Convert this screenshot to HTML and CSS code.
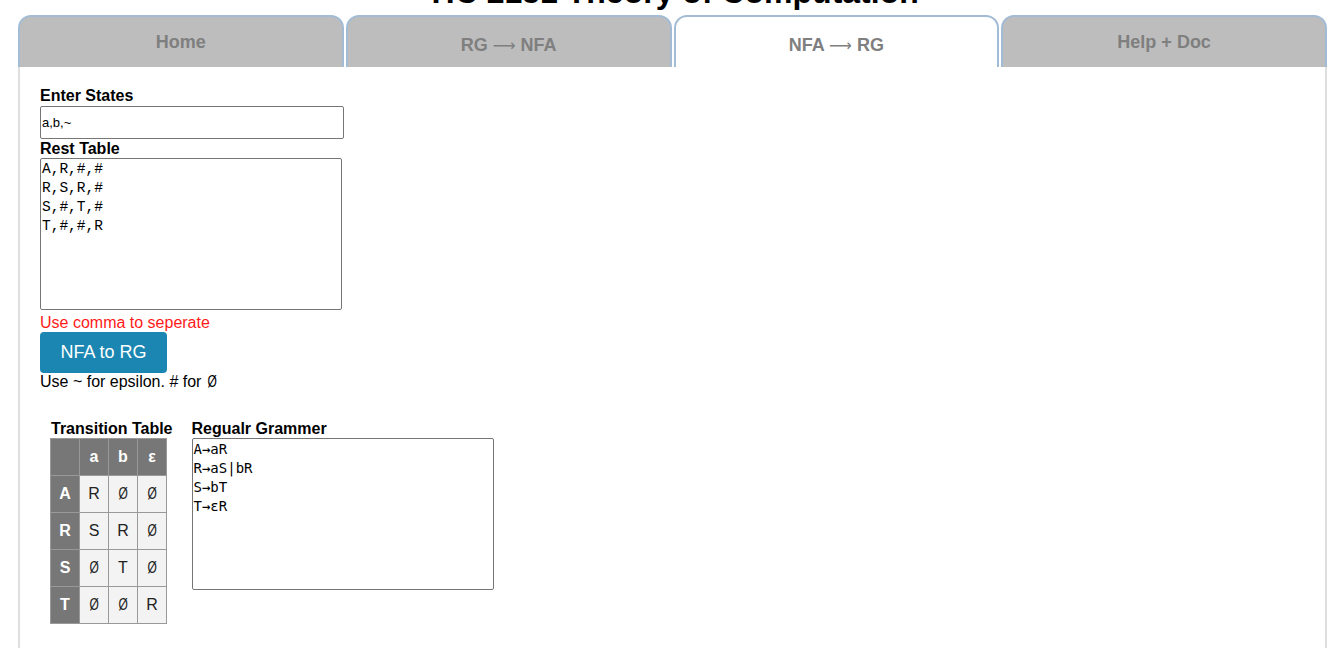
FILE: index.html
```html
<!DOCTYPE html>
<html>
<head>
<meta charset="utf-8">
<link rel="stylesheet" href="styles.css">
</head>
<body>
<h1 class="title">TIC 2151 Theory of Computation</h1>
<div class="tabs">
  <div class="tab">Home</div>
  <div class="tab arrowed">RG <span class="arr">⟶</span> NFA</div>
  <div class="tab active arrowed">NFA <span class="arr">⟶</span> RG</div>
  <div class="tab">Help + Doc</div>
</div>
<div class="panel">
  <div class="label">Enter States</div>
  <input class="field" type="text" value="a,b,~">
  <div class="label">Rest Table</div>
  <textarea class="area">A,R,#,#
R,S,R,#
S,#,T,#
T,#,#,R</textarea>
  <div class="hint-red">Use comma to seperate</div>
  <button class="btn">NFA to RG</button>
  <div class="hint">Use ~ for epsilon. # for <span class="empty">Ø</span></div>

  <div class="results">
    <div class="col">
      <div class="label">Transition Table</div>
      <table class="tt">
        <tr><th></th><th>a</th><th>b</th><th>ε</th></tr>
        <tr><th>A</th><td>R</td><td><span class="empty">Ø</span></td><td><span class="empty">Ø</span></td></tr>
        <tr><th>R</th><td>S</td><td>R</td><td><span class="empty">Ø</span></td></tr>
        <tr><th>S</th><td><span class="empty">Ø</span></td><td>T</td><td><span class="empty">Ø</span></td></tr>
        <tr><th>T</th><td><span class="empty">Ø</span></td><td><span class="empty">Ø</span></td><td>R</td></tr>
      </table>
    </div>
    <div class="col">
      <div class="label">Regualr Grammer</div>
      <textarea class="area grammar">A→aR
R→aS|bR
S→bT
T→εR</textarea>
    </div>
  </div>
</div>
</body>
</html>
```
FILE: styles.css
```css
html, body { margin: 0; padding: 0; background: #fff; }
body {
  font-family: "Liberation Sans", Arial, sans-serif;
  color: #000;
  padding: 0 17px 0 18px;
  overflow: hidden;
  height: 648px;
}
.title {
  margin: -26px 0 0 0;
  font-size: 32px;
  line-height: 37px;
  font-weight: bold;
  text-align: center;
  height: 41px;
}
.tabs {
  display: flex;
  gap: 2px;
  height: 52px;
}
.tab {
  flex: 1;
  background: #bdbdbd;
  border: 2px solid #a3bcd5;
  border-bottom: none;
  border-radius: 13px 13px 0 0;
  color: #7f7f7f;
  font-weight: bold;
  font-size: 18px;
  text-align: center;
  padding-top: 15px;
  box-sizing: border-box;
}
.tab.arrowed { padding-top: 18px; }
.tab.active { background: #fff; }
.arr { font-weight: normal; font-family: "DejaVu Sans", sans-serif; font-size: 16px; }
.panel {
  border-left: 2px solid #dedede;
  border-right: 2px solid #dedede;
  padding: 19px 20px 40px 20px;
  height: 600px;
}
.label {
  font-weight: bold;
  font-size: 16px;
  line-height: 19px;
}
.field {
  display: block;
  width: 304px;
  height: 33px;
  box-sizing: border-box;
  border: 1px solid #767676;
  border-radius: 2px;
  padding: 0 1px;
  font-family: "Liberation Sans", Arial, sans-serif;
  font-size: 13px;
  margin: 1px 0 0 0;
}
.area {
  display: block;
  width: 302px;
  height: 152px;
  box-sizing: border-box;
  border: 1px solid #767676;
  border-radius: 2px;
  padding: 1px 1px;
  margin: 0;
  font-family: "Liberation Mono", monospace;
  font-size: 14.5px;
  line-height: 19px;
  resize: none;
  color: #000;
}
.area.grammar {
  font-family: "DejaVu Sans Mono", monospace;
  font-size: 14px;
}
.hint-red {
  color: #ff1a1a;
  font-size: 16px;
  line-height: 18px;
  margin-top: 4px;
}
.btn {
  display: block;
  background: #1a86b1;
  color: #fff;
  border: none;
  border-radius: 4px;
  height: 41px;
  width: 127px;
  font-family: "Liberation Sans", Arial, sans-serif;
  font-size: 18px;
  padding: 0;
  margin-top: 0;
}
.hint {
  font-size: 16px;
  line-height: 18px;
}
.empty {
  display: inline-block;
  transform: scaleX(0.75);
  font-weight: normal;
}
.results {
  display: flex;
  gap: 19px;
  margin-top: 29px;
  margin-left: 11px;
  align-items: flex-start;
}
.col .label { line-height: 18px; }
.tt {
  border-collapse: collapse;
  margin-left: -1px;
}
.tt th, .tt td {
  border: 1px solid #999;
  width: 28px;
  height: 36px;
  padding: 0;
  text-align: center;
  font-size: 16px;
}
.tt th {
  background: #777;
  color: #fff;
  font-weight: bold;
}
.tt td {
  background: #f3f3f3;
  color: #222;
}
```
